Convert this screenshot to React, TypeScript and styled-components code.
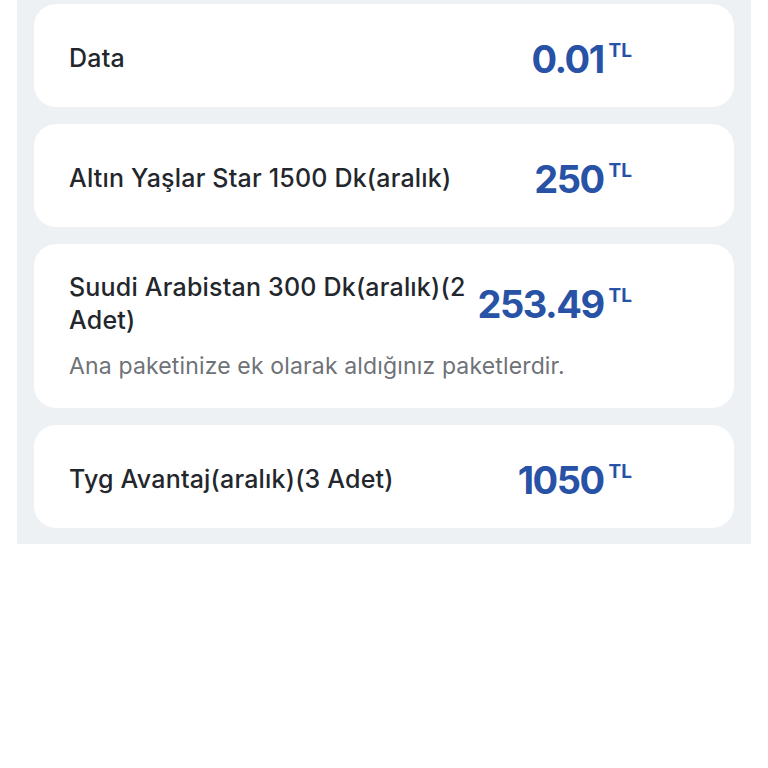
import React from "react";
import styled, { createGlobalStyle } from "styled-components";

const GlobalStyle = createGlobalStyle`
    html, body {
        margin: 0;
        padding: 0;
        background: #ffffff;
    }
    body {
        font-family: "Inter", "Noto Sans", sans-serif;
        -webkit-font-smoothing: antialiased;
    }
`;

const List = styled.div`
    margin-left: 17px;
    width: 734px;
    box-sizing: border-box;
    padding: 4px 17px 16px;
    background: #eef1f4;
    display: flex;
    flex-direction: column;
    gap: 17px;
`;

const Card = styled.div<{ $withNote?: boolean }>`
    background: #ffffff;
    border-radius: 22px;
    padding: ${({ $withNote }) => ($withNote ? "27px 35px 27px" : "30px 35px 24px")};
    display: flex;
    flex-direction: column;
    gap: 14px;
`;

const Row = styled.div`
    display: flex;
    align-items: center;
    gap: 8px;
    min-height: 49px;
    padding-right: 67px;
`;

const Title = styled.div`
    flex: 1;
    font-size: 25px;
    line-height: 33px;
    font-weight: 500;
    letter-spacing: 0.2px;
    color: #23272d;
`;

const Price = styled.div`
    flex-shrink: 0;
    display: flex;
    align-items: flex-start;
    color: #2752a6;
    font-weight: 700;
`;

const Amount = styled.span`
    font-size: 38px;
    line-height: 44px;
    letter-spacing: -1.5px;
`;

const Currency = styled.span`
    font-size: 19px;
    line-height: 19px;
    margin-left: 5px;
    margin-top: 4px;
`;

const Note = styled.div`
    font-size: 23px;
    line-height: 30px;
    letter-spacing: 0.15px;
    color: #6e7277;
`;

type Item = { title: string; amount: string; note?: string };

const items: Item[] = [
    { title: "Data", amount: "0.01" },
    { title: "Altın Yaşlar Star 1500 Dk(aralık)", amount: "250" },
    {
        title: "Suudi Arabistan 300 Dk(aralık)(2 Adet)",
        amount: "253.49",
        note: "Ana paketinize ek olarak aldığınız paketlerdir.",
    },
    { title: "Tyg Avantaj(aralık)(3 Adet)", amount: "1050" },
];

const App: React.FC = () => (
    <>
        <GlobalStyle />
        <List>
            {items.map((item) => (
                <Card key={item.title} $withNote={!!item.note}>
                    <Row>
                        <Title>{item.title}</Title>
                        <Price>
                            <Amount>{item.amount}</Amount>
                            <Currency>TL</Currency>
                        </Price>
                    </Row>
                    {item.note && <Note>{item.note}</Note>}
                </Card>
            ))}
        </List>
    </>
);

export default App;
